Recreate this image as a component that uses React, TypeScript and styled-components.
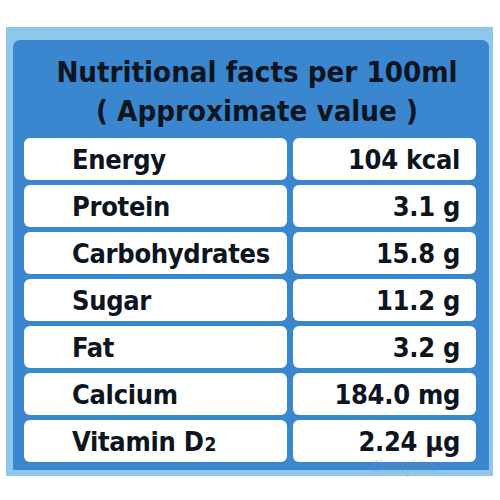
import React from 'react';
import styled, { createGlobalStyle } from 'styled-components';

const GlobalStyle = createGlobalStyle`
  html, body {
    margin: 0;
    padding: 0;
    background: #ffffff;
  }
  body {
    font-family: 'DejaVu Sans Condensed', 'DejaVu Sans', sans-serif;
    font-stretch: condensed;
  }
`;

const Page = styled.div`
  width: 500px;
  height: 500px;
  padding: 27px 0 0 6px;
  box-sizing: border-box;
  position: relative;
`;

const OuterPanel = styled.div`
  width: 487px;
  height: 449px;
  box-sizing: border-box;
  padding: 13px 4px 6px 7px;
  background: #8ec7eb;
`;

const Label = styled.div`
  height: 100%;
  box-sizing: border-box;
  background: #3a86cf;
  border-radius: 7px 7px 0 0;
  padding: 0 13px 7px 11px;
  display: flex;
  flex-direction: column;
`;

const Heading = styled.div`
  height: 98px;
  box-sizing: border-box;
  padding: 13px 0 0 14px;
  text-align: center;
  color: #0c1520;
  font-weight: 700;
  font-size: 29.2px;
  line-height: 39px;
  letter-spacing: 0;
`;

const HeadLine = styled.div`
  white-space: nowrap;
`;

const Table = styled.div`
  display: grid;
  grid-template-columns: 263px 183px;
  grid-auto-rows: 42px;
  column-gap: 6px;
  row-gap: 5px;
`;

const Cell = styled.div<{ $align: 'left' | 'right' }>`
  background: #ffffff;
  border-radius: 6px;
  display: flex;
  align-items: center;
  justify-content: ${p => (p.$align === 'left' ? 'flex-start' : 'flex-end')};
  padding: ${p => (p.$align === 'left' ? '0 0 0 48px' : '0 16px 0 0')};
  font-weight: 700;
  font-size: 27px;
  line-height: 1;
  color: #0c1520;
  white-space: nowrap;
  letter-spacing: -0.3px;
`;

const Sub = styled.span`
  font-size: 19px;
  position: relative;
  top: 3px;
  margin-left: 1px;
`;

const Watermark = styled.div`
  position: absolute;
  left: 372px;
  top: 458px;
  font-family: 'Open Sans', sans-serif;
  font-size: 17px;
  line-height: 17px;
  font-weight: 600;
  color: rgba(140, 150, 160, 0.22);
`;

const rows: { name: React.ReactNode; value: string }[] = [
  { name: 'Energy', value: '104 kcal' },
  { name: 'Protein', value: '3.1 g' },
  { name: 'Carbohydrates', value: '15.8 g' },
  { name: 'Sugar', value: '11.2 g' },
  { name: 'Fat', value: '3.2 g' },
  { name: 'Calcium', value: '184.0 mg' },
  { name: <>Vitamin D<Sub>2</Sub></>, value: '2.24 μg' },
];

const App: React.FC = () => {
  return (
    <Page>
      <GlobalStyle />
      <OuterPanel>
        <Label>
          <Heading>
            <HeadLine>Nutritional facts per 100ml</HeadLine>
            <HeadLine>( Approximate value )</HeadLine>
          </Heading>
          <Table>
            {rows.map((r, i) => (
              <React.Fragment key={i}>
                <Cell $align="left">{r.name}</Cell>
                <Cell $align="right">{r.value}</Cell>
              </React.Fragment>
            ))}
          </Table>
        </Label>
      </OuterPanel>
      <Watermark>Chattybao</Watermark>
    </Page>
  );
};

export default App;
